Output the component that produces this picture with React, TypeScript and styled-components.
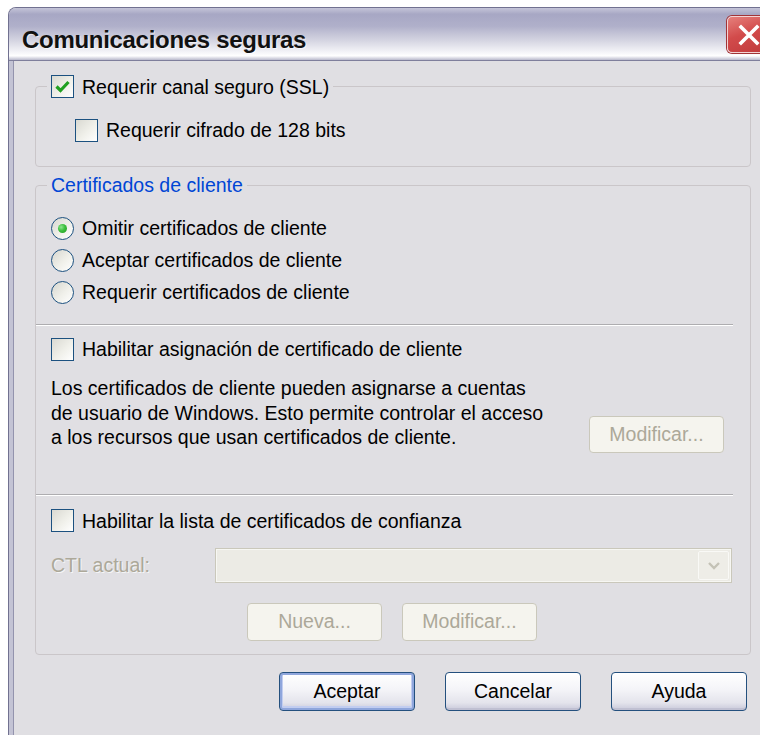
import React from 'react';
import styled, { createGlobalStyle } from 'styled-components';

const GlobalStyle = createGlobalStyle`
  html, body {
    margin: 0;
    padding: 0;
    height: 735px;
    overflow: hidden;
    background: #fff;
  }
  body {
    font-family: "Liberation Sans", Arial, sans-serif;
    font-size: 19.5px;
    color: #000;
  }
`;

const Window = styled.div`
  margin: 7px 0 0 8px;
  width: 778px;
  height: 740px;
  display: flex;
  flex-direction: column;
  border: 1px solid #717190;
  border-bottom: none;
  border-radius: 8px 8px 0 0;
  overflow: hidden;
  background: #e0dfe3;
`;

const TitleBar = styled.div`
  height: 52px;
  display: flex;
  justify-content: space-between;
  align-items: flex-start;
  padding: 0 16px 0 13px;
  border-bottom: 1px solid #7f7f9c;
  background: linear-gradient(
    #c4c4d8 0%,
    #a7a7c4 12%,
    #b0b0ca 35%,
    #d4d4e1 62%,
    #f3f3f7 84%,
    #ffffff 92%,
    #b9b9cc 100%
  );
`;

const Title = styled.div`
  margin-top: 18px;
  font-size: 24px;
  line-height: 28px;
  font-weight: bold;
  letter-spacing: -0.3px;
  color: #111;
  text-shadow: 1px 1px 0 rgba(255, 255, 255, 0.6);
`;

const CloseButton = styled.div`
  margin-top: 8px;
  width: 44px;
  height: 37px;
  box-sizing: border-box;
  border: 1px solid #f4d4d4;
  border-radius: 5px;
  background: linear-gradient(160deg, #e6807c 0%, #d24b4b 45%, #c03a3c 100%);
  box-shadow: 0 0 0 1px #a13437;
  display: flex;
  align-items: center;
  justify-content: center;
`;

const Client = styled.div`
  flex: 1;
  border-left: 4px solid #c3c3d4;
  box-shadow: inset 1px 0 0 #9393ad;
  padding: 13px 0 0 22px;
`;

const Content = styled.div`
  width: 716px;
  display: flex;
  flex-direction: column;
`;

const Group = styled.fieldset<{ $pb: number; $mt?: number }>`
  margin: ${p => p.$mt ?? 0}px 0 0 0;
  padding: 0 15px ${p => p.$pb}px 15px;
  min-width: 0;
  border: 1px solid #cac6c9;
  border-radius: 4px;
`;

const Legend = styled.legend<{ $blue?: boolean }>`
  padding: 0 4px;
  margin-left: -4px;
  height: 24px;
  line-height: 24px;
  color: ${p => (p.$blue ? '#0046d5' : '#000')};
`;

const Option = styled.div<{ $mt?: number; $ml?: number; $disabled?: boolean }>`
  display: flex;
  align-items: center;
  gap: 8px;
  height: 24px;
  line-height: 24px;
  white-space: nowrap;
  margin-top: ${p => p.$mt ?? 0}px;
  margin-left: ${p => p.$ml ?? 0}px;
  color: ${p => (p.$disabled ? '#aca899' : '#000')};
`;

const InlineOption = styled(Option)`
  display: inline-flex;
`;

const Box = styled.span`
  width: 23px;
  height: 23px;
  box-sizing: border-box;
  flex: none;
  border: 1px solid #1c5180;
  background: linear-gradient(135deg, #d9d9d2 0%, #f0f0ea 55%, #ffffff 100%);
  display: flex;
  align-items: center;
  justify-content: center;
`;

const Circle = styled.span`
  width: 23px;
  height: 23px;
  box-sizing: border-box;
  flex: none;
  border-radius: 50%;
  border: 1px solid #1c5180;
  background: linear-gradient(135deg, #d6d6cf 0%, #f0f0ea 55%, #ffffff 100%);
  display: flex;
  align-items: center;
  justify-content: center;
`;

const Dot = styled.span`
  width: 9px;
  height: 9px;
  border-radius: 50%;
  background: radial-gradient(circle at 35% 35%, #8ee68e 0%, #3cbf3c 45%, #1e9a1e 100%);
`;

const RadioList = styled.div`
  margin-top: 19px;
  display: flex;
  flex-direction: column;
  gap: 8px;
`;

const Separator = styled.div<{ $mt: number }>`
  margin: ${p => p.$mt}px 2px 0 -15px;
  height: 1px;
  background: #aeadb0;
  border-bottom: 1px solid #ffffff;
`;

const MappingRow = styled.div`
  margin-top: 15px;
  display: flex;
  justify-content: space-between;
  align-items: flex-end;
  padding-right: 11px;
`;

const Paragraph = styled.p`
  margin: 0;
  line-height: 24.5px;
  white-space: nowrap;
`;

const SmallButton = styled.div<{ $h?: number; $mb?: number }>`
  width: 135px;
  height: ${p => p.$h ?? 37}px;
  margin-bottom: ${p => p.$mb ?? 0}px;
  box-sizing: border-box;
  border: 1px solid #cac8bb;
  border-radius: 4px;
  background: #f5f4ee;
  color: #aca899;
  display: flex;
  align-items: center;
  justify-content: center;
`;

const CtlRow = styled.div`
  margin-top: 15px;
  display: flex;
  align-items: center;
  padding-right: 3px;
`;

const CtlLabel = styled.span`
  width: 164px;
  color: #aca899;
  text-shadow: 1px 1px 0 rgba(255, 255, 255, 0.7);
`;

const Combo = styled.div`
  flex: 1;
  height: 35px;
  box-sizing: border-box;
  border: 1px solid #cac8bb;
  background: #ecebe5;
  box-shadow: inset 0 0 0 1px #f7f7f3;
  display: flex;
  justify-content: flex-end;
  padding: 2px;
`;

const ComboArrow = styled.div`
  width: 31px;
  box-sizing: border-box;
  border: 1px solid #f9f9f6;
  border-radius: 2px;
  background: #eeede7;
  display: flex;
  align-items: center;
  justify-content: center;
`;

const CtlButtons = styled.div`
  margin-top: 20px;
  padding-left: 196px;
  display: flex;
  gap: 20px;
`;

const Footer = styled.div`
  margin-top: 17px;
  display: flex;
  justify-content: flex-end;
  gap: 30px;
  padding-right: 4px;
`;

const DialogButton = styled.div<{ $default?: boolean }>`
  width: 136px;
  height: 39px;
  box-sizing: border-box;
  border: 1px solid #24507e;
  border-radius: 4px;
  background: linear-gradient(#ffffff 0%, #f4f4f8 45%, #e4e4ec 80%, #c9c9da 100%);
  box-shadow: ${p =>
    p.$default ? 'inset 0 0 0 2px #8fa6dc, inset 0 -1px 0 3px #c2cdf0' : 'inset 0 -2px 0 #c0c0d2'};
  display: flex;
  align-items: center;
  justify-content: center;
`;

const Check = ({ checked }: { checked?: boolean }) => (
  <Box>
    {checked && (
      <svg width="15" height="13" viewBox="0 0 15 13">
        <path d="M1.5 6.5 L5.5 10.5 L13.5 2" fill="none" stroke="#21a121" strokeWidth="3.2" />
      </svg>
    )}
  </Box>
);

const Radio = ({ selected }: { selected?: boolean }) => <Circle>{selected && <Dot />}</Circle>;

export default function App() {
  return (
    <>
      <GlobalStyle />
      <Window>
        <TitleBar>
          <Title>Comunicaciones seguras</Title>
          <CloseButton>
            <svg width="24" height="24" viewBox="0 0 24 24">
              <path d="M4 4 L20 20 M20 4 L4 20" stroke="#fff" strokeWidth="3.6" strokeLinecap="square" />
            </svg>
          </CloseButton>
        </TitleBar>
        <Client>
          <Content>
            <Group $pb={24}>
              <Legend>
                <InlineOption>
                  <Check checked />
                  Requerir canal seguro (SSL)
                </InlineOption>
              </Legend>
              <Option $mt={20} $ml={24}>
                <Check />
                Requerir cifrado de 128 bits
              </Option>
            </Group>

            <Group $pb={13} $mt={6}>
              <Legend $blue>Certificados de cliente</Legend>
              <RadioList>
                <Option>
                  <Radio selected />
                  Omitir certificados de cliente
                </Option>
                <Option>
                  <Radio />
                  Aceptar certificados de cliente
                </Option>
                <Option>
                  <Radio />
                  Requerir certificados de cliente
                </Option>
              </RadioList>

              <Separator $mt={20} />
              <Option $mt={11}>
                <Check />
                Habilitar asignación de certificado de cliente
              </Option>
              <MappingRow>
                <Paragraph>
                  Los certificados de cliente pueden asignarse a cuentas
                  <br />
                  de usuario de Windows. Esto permite controlar el acceso
                  <br />
                  a los recursos que usan certificados de cliente.
                </Paragraph>
                <SmallButton $mb={-3}>Modificar...</SmallButton>
              </MappingRow>

              <Separator $mt={44} />
              <Option $mt={13}>
                <Check />
                Habilitar la lista de certificados de confianza
              </Option>
              <CtlRow>
                <CtlLabel>CTL actual:</CtlLabel>
                <Combo>
                  <ComboArrow>
                    <svg width="14" height="9" viewBox="0 0 14 9">
                      <path d="M2 2 L7 7 L12 2" fill="none" stroke="#c4c2b6" strokeWidth="2.4" />
                    </svg>
                  </ComboArrow>
                </Combo>
              </CtlRow>
              <CtlButtons>
                <SmallButton $h={38}>Nueva...</SmallButton>
                <SmallButton $h={38}>Modificar...</SmallButton>
              </CtlButtons>
            </Group>

            <Footer>
              <DialogButton $default>Aceptar</DialogButton>
              <DialogButton>Cancelar</DialogButton>
              <DialogButton>Ayuda</DialogButton>
            </Footer>
          </Content>
        </Client>
      </Window>
    </>
  );
}
